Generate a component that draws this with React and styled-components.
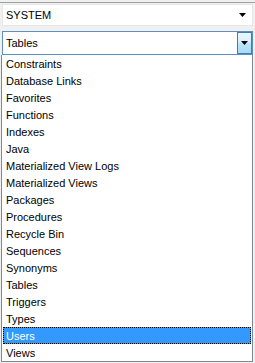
import React from 'react';
import styled, { createGlobalStyle } from 'styled-components';

const GlobalStyle = createGlobalStyle`
  html, body {
    margin: 0;
    padding: 0;
    background: #f0f0f0;
  }
  body {
    font-family: "Liberation Sans", Arial, sans-serif;
    font-size: 11px;
    color: #000;
  }
`;

const Panel = styled.div`
  width: 255px;
  height: 363px;
  box-sizing: border-box;
  border-top: 1px solid #a0a0a0;
  margin-top: 2px;
  padding: 1px 1px 0 2px;
  display: flex;
  flex-direction: column;
  overflow: hidden;
`;

const Combo = styled.div`
  display: flex;
  align-items: center;
  height: ${({ $h }) => $h}px;
  box-sizing: border-box;
  background: #fff;
  border: 1px solid ${({ $focused }) => ($focused ? '#5b8ec1' : '#e6e6e6')};
  margin-right: 1px;
`;

const ComboText = styled.span`
  flex: 1;
  padding-left: 3px;
  line-height: 1;
`;

const PlainArrow = styled.span`
  width: 16px;
  display: flex;
  justify-content: center;
  margin-right: 2px;
`;

const ArrowButton = styled.span`
  width: 15px;
  align-self: stretch;
  display: flex;
  align-items: center;
  justify-content: center;
  box-sizing: border-box;
  border: 1px solid #3c7fb1;
  background: linear-gradient(to bottom, #eaf6fd 0%, #d9f0fc 45%, #bee6fd 50%, #a7d9f5 100%);
`;

const Triangle = () => (
  <svg width="7" height="4" viewBox="0 0 7 4">
    <path d="M0 0H7L3.5 4Z" fill="#000" />
  </svg>
);

const Gap = styled.div`
  height: 5px;
`;

const List = styled.ul`
  list-style: none;
  margin: 0 1px 0 -1px;
  padding: 0;
  background: #fff;
  border: 1px solid #828790;
  border-top: none;
`;

const Item = styled.li`
  height: 17px;
  box-sizing: border-box;
  padding-left: 3px;
  margin: 0 1px;
  display: flex;
  align-items: center;
  background: ${({ $selected }) => ($selected ? '#3399ff' : 'transparent')};
  color: ${({ $selected }) => ($selected ? '#fff' : '#000')};
  outline: ${({ $selected }) => ($selected ? '1px dotted #000' : 'none')};
  outline-offset: -1px;
`;

const items = [
  'Constraints',
  'Database Links',
  'Favorites',
  'Functions',
  'Indexes',
  'Java',
  'Materialized View Logs',
  'Materialized Views',
  'Packages',
  'Procedures',
  'Recycle Bin',
  'Sequences',
  'Synonyms',
  'Tables',
  'Triggers',
  'Types',
  'Users',
  'Views',
];

export default function App() {
  return (
    <>
      <GlobalStyle />
      <Panel>
        <Combo $h={22}>
          <ComboText>SYSTEM</ComboText>
          <PlainArrow><Triangle /></PlainArrow>
        </Combo>
        <Gap />
        <Combo $h={24} $focused>
          <ComboText>Tables</ComboText>
          <ArrowButton><Triangle /></ArrowButton>
        </Combo>
        <List>
          {items.map((name) => (
            <Item key={name} $selected={name === 'Users'}>{name}</Item>
          ))}
        </List>
      </Panel>
    </>
  );
}
